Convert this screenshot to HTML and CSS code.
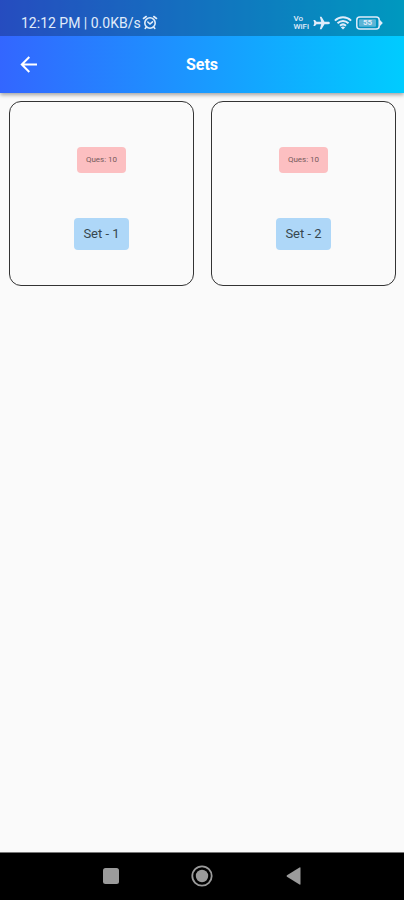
FILE: index.html
```html
<!DOCTYPE html>
<html lang="en">
<head>
<meta charset="utf-8">
<meta name="viewport" content="width=device-width, initial-scale=1">
<title>Sets</title>
<link rel="stylesheet" href="styles.css">
</head>
<body>
<header class="header">
  <div class="status">
    <span class="clock">12:12 PM | 0.0KB/s</span>
    <svg class="alarm" width="16" height="16" viewBox="0 0 16 16" fill="none" stroke="currentColor" stroke-width="1.6" stroke-linecap="round">
      <circle cx="8" cy="8" r="5.2"/>
      <path d="M1.500 3.500 4.200 1.500M14.500 3.500 11.800 1.500M5.800 7 8 9 10.500 6.800M4.200 12.300 3.200 13.500M11.800 12.300 12.800 13.500"/>
    </svg>
    <div class="indicators">
      <span class="vowifi"><span>Vo</span><span>WiFi</span></span>
      <svg width="17" height="16" viewBox="0 0 17 16" fill="currentColor">
        <path d="M16.800 8c0-.8-.6-1.200-1.500-1.200h-3.800L8.500 1.800H6.800l1.400 5H3.500L2 5H.4L1.300 8 .4 11H2l1.500-1.800h4.700l-1.400 5h1.700l3-5h3.800c.9 0 1.500-.4 1.500-1.200Z"/>
      </svg>
      <svg width="18" height="16" viewBox="0 0 18 16" fill="none" stroke="currentColor" stroke-width="2">
        <path d="M.9 5.600C5.500 1.200 12.500 1.200 17.100 5.600M3.500 8.200c3.200-3 7.800-3 11 0M6 10.700c1.800-1.600 4.200-1.600 6 0"/>
        <path d="M9 14.600 6.800 12.200c1.300-1 3.100-1 4.400 0Z" fill="currentColor" stroke="none"/>
      </svg>
      <span class="battery">
        <svg width="27" height="14" viewBox="0 0 27 14" fill="none" stroke="currentColor" stroke-width="1.500">
          <rect x=".8" y="1" width="22.400" height="12" rx="3"/>
          <rect x="3" y="3.200" width="17" height="7.600" rx="1" fill="currentColor" fill-opacity=".4" stroke="none"/>
          <path d="M23.500 3.500 26.800 7 23.500 10.500Z" fill="currentColor" stroke="none"/>
        </svg>
        <span class="level">55</span>
      </span>
    </div>
  </div>
  <div class="appbar">
    <button class="back" type="button" aria-label="Back">
      <svg width="18" height="18" viewBox="0 0 18 18" fill="none" stroke="currentColor" stroke-width="2">
        <path d="M17 8.500H2.500M9.300 1 1.800 8.500l7.500 7.500"/>
      </svg>
    </button>
    <h1 class="title">Sets</h1>
  </div>
</header>
<main class="sets">
  <a class="card" href="#set-1"><span class="ques">Ques: 10</span><span class="name">Set - 1</span></a>
  <a class="card" href="#set-2"><span class="ques">Ques: 10</span><span class="name">Set - 2</span></a>
</main>
<nav class="navbar" aria-label="System">
  <button type="button" aria-label="Recent apps">
    <svg width="22" height="22" viewBox="0 0 22 22"><rect x="3" y="3" width="16" height="16" rx="2.500" fill="#9b9b9b"/></svg>
  </button>
  <button type="button" aria-label="Home">
    <svg width="22" height="22" viewBox="0 0 22 22"><circle cx="11" cy="11" r="9.700" fill="none" stroke="#9b9b9b" stroke-width="1.800"/><circle cx="11" cy="11" r="6.200" fill="#9b9b9b"/></svg>
  </button>
  <button type="button" aria-label="Back">
    <svg width="22" height="22" viewBox="0 0 22 22"><path d="M18.500 3v16q0 1-1 .5L5 11.800q-1-.8 0-1.600L17.500 2.500q1-.5 1 .5Z" fill="#9b9b9b"/></svg>
  </button>
</nav>
</body>
</html>
```
FILE: styles.css
```css
* {
  box-sizing: border-box;
}

body {
  margin: 0;
  min-height: 100vh;
  display: flex;
  flex-direction: column;
  background: #fafafa;
  font-family: Roboto, "Liberation Sans", sans-serif;
}

button {
  border: 0;
  padding: 0;
  background: none;
  color: inherit;
  display: flex;
  align-items: center;
  justify-content: center;
}

svg {
  display: block;
}

.header {
  background: linear-gradient(90deg, #3366ff, #00ccff);
  color: #fff;
  box-shadow: 0 2px 4px rgba(0, 0, 0, 0.35);
}

.status {
  height: 36px;
  padding: 10px 21px 0;
  display: flex;
  align-items: center;
  background: rgba(0, 0, 0, 0.25);
  color: #e0ecfa;
}

.clock {
  font-size: 14px;
  font-weight: 400;
  line-height: 16px;
}

.alarm {
  margin-left: 1px;
}

.indicators {
  margin-left: auto;
  display: flex;
  align-items: center;
  gap: 4px;
}

.vowifi {
  display: flex;
  flex-direction: column;
  font-size: 8px;
  font-weight: 500;
  line-height: 8px;
}

.battery {
  display: grid;
  align-items: center;
}

.battery > * {
  grid-area: 1 / 1;
}

.level {
  padding-left: 7px;
  font-size: 8px;
  font-weight: 700;
  line-height: 14px;
}

.appbar {
  height: 57px;
  padding: 0 20px;
  display: grid;
  grid-template-columns: 1fr auto 1fr;
  align-items: center;
}

.back {
  justify-self: start;
}

.title {
  margin: 0;
  font-size: 16px;
  font-weight: 700;
  line-height: 20px;
}

.sets {
  flex: 1;
  padding: 8px 8px 8px 9px;
  display: grid;
  grid-template-columns: 1fr 1fr;
  gap: 17px;
  align-items: start;
}

.card {
  aspect-ratio: 1;
  padding-top: 10px;
  display: flex;
  flex-direction: column;
  align-items: center;
  justify-content: center;
  gap: 45px;
  border: 1px solid #333;
  border-radius: 12px;
  color: #37474f;
  text-decoration: none;
}

.ques {
  padding: 0 9px;
  border-radius: 4px;
  background: #fcbfc1;
  color: #765a5c;
  font-size: 8px;
  line-height: 26px;
}

.name {
  padding: 0 9px;
  border-radius: 4px;
  background: #aed7f8;
  font-size: 13px;
  line-height: 32px;
}

.navbar {
  height: 48px;
  padding: 0 65px 2px;
  display: grid;
  grid-template-columns: repeat(3, 1fr);
  background: #000;
  border-top: 1px solid #777;
}
```
